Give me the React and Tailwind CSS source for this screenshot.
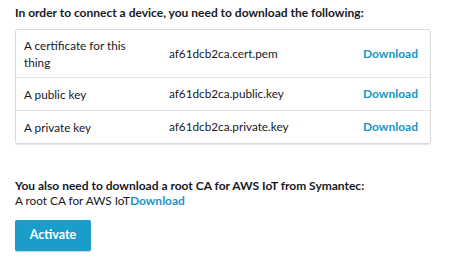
import React from 'react';

const files = [
  { label: 'A certificate for this thing', file: 'af61dcb2ca.cert.pem', tall: true },
  { label: 'A public key', file: 'af61dcb2ca.public.key' },
  { label: 'A private key', file: 'af61dcb2ca.private.key' },
];

export default function App() {
  return (
    <div className="w-[450px] h-[261px] bg-white px-[15px] pt-[5px] text-[11.75px] text-[#16191f] font-['Lato',sans-serif]">
      <p className="font-bold text-[12px] leading-[16px] m-0">
        In order to connect a device, you need to download the following:
      </p>
      <div className="mt-[8px] w-[416px] rounded-[3px] border border-[#d5dbdb] shadow-[0_1px_1px_rgba(0,0,0,0.1)]">
        {files.map((f, i) => (
          <div
            key={f.file}
            className={`flex items-center pl-[8px] ${i > 0 ? 'border-t border-[#e1e4e4]' : ''} ${f.tall ? 'h-[47px]' : 'h-[33px]'}`}
          >
            <span className="w-[145px] leading-[17px] pr-6">{f.label}</span>
            <span className="w-[194px]">{f.file}</span>
            <a className="font-bold text-[12px] text-[#1a95c4] cursor-pointer">Download</a>
          </div>
        ))}
      </div>
      <p className="mt-[34px] font-bold text-[12px] leading-[15px] m-0">
        You also need to download a root CA for AWS IoT from Symantec:
      </p>
      <p className="leading-[15px] m-0">
        A root CA for AWS IoT<a className="font-bold text-[12px] text-[#1a95c4] cursor-pointer">Download</a>
      </p>
      <button className="mt-[12px] w-[76px] h-[31px] rounded-[2px] bg-[#1a9ec9] text-white font-bold text-[12.5px] shadow-[0_1px_1px_rgba(0,0,0,0.2)]">
        Activate
      </button>
    </div>
  );
}
